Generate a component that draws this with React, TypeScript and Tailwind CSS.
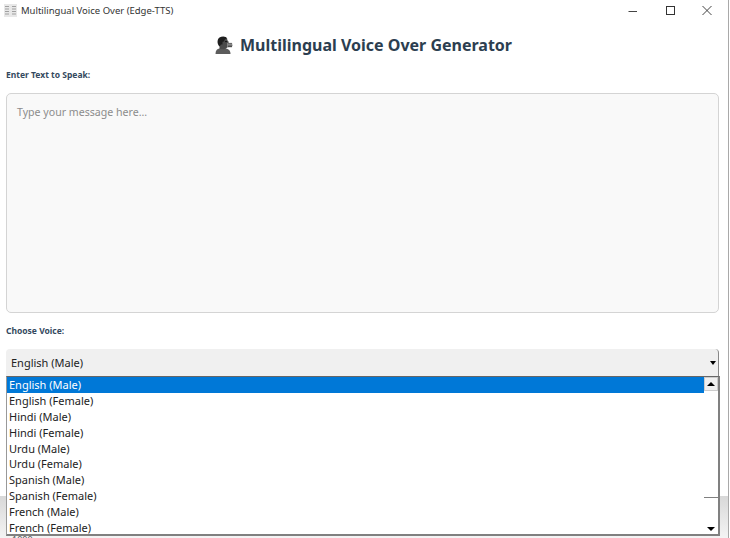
import React from 'react';

const voices = [
  'English (Male)',
  'English (Female)',
  'Hindi (Male)',
  'Hindi (Female)',
  'Urdu (Male)',
  'Urdu (Female)',
  'Spanish (Male)',
  'Spanish (Female)',
  'French (Male)',
  'French (Female)',
];

function SpeakingHead() {
  return (
    <svg width="20" height="20" viewBox="0 0 20 20" className="shrink-0">
      {/* shoulders */}
      <path d="M1.5 19 C1.5 15.5 3 14.2 5.5 13.6 L11.5 13.6 C14.5 14 16.5 15.5 16.5 19 Z" fill="#5c5c5c" />
      {/* neck and face */}
      <path d="M5.5 14 L5.5 10 C4 7 5 3.5 8 2.5 C11 1.6 13.4 3 13.8 6 L15 7 L15 12 L13 12.6 C12.6 13.6 11.5 14.2 10 14.2 Z" fill="#4a4a4a" />
      {/* hair */}
      <path d="M5.6 11.5 C2.8 9 3 4.5 5.5 2.6 C8 0.8 12 1 13.4 3.6 C11.4 3.8 10.4 4.8 10 6.4 L8.6 6.8 L8.4 9.4 L7 9.6 Z" fill="#1e1e1e" />
      {/* eye */}
      <path d="M11 6.6 L13 6.6" stroke="#111111" strokeWidth="1" />
      {/* sound lines at the mouth */}
      <rect x="13.6" y="7.6" width="4.8" height="5" rx="1" fill="#dcdcdc" />
      <path d="M14 8.8 L18 8.8 M14 10.2 L18.4 10.2 M14 11.6 L18 11.6" stroke="#2a2a2a" strokeWidth="0.9" />
    </svg>
  );
}

export default function App() {
  return (
    <div className="relative w-[730px] h-[538px] overflow-hidden bg-white font-['Noto_Sans',sans-serif] text-[#222]">
      <div className="flex flex-col h-full w-[729px] border-r border-[#a9a9a9] bg-white">
        {/* title bar */}
        <div className="flex items-center h-[21px] shrink-0 pl-[4px]">
          <svg width="13" height="13" viewBox="0 0 13 13" className="shrink-0">
            <rect width="13" height="13" fill="#e8e8e8" />
            <path d="M1 2.5h4M8 2.5h4M1 5h4M8 5h4M1 7.5h4M8 7.5h4M1 10h4M8 10h4" stroke="#a0a0a0" strokeWidth="1" />
          </svg>
          <span className="ml-[4px] text-[9.5px] leading-none text-[#333]">Multilingual Voice Over (Edge-TTS)</span>
          <div className="ml-auto flex items-center gap-[25px] pr-[15px]">
            <svg width="12" height="12" viewBox="0 0 12 12"><path d="M1.5 6.5h8.5" stroke="#444" strokeWidth="1" /></svg>
            <svg width="12" height="12" viewBox="0 0 12 12"><rect x="2.5" y="1.5" width="8" height="8" fill="none" stroke="#333" strokeWidth="1" /></svg>
            <svg width="12" height="12" viewBox="0 0 12 12"><path d="M1.5 1L10.5 10M10.5 1L1.5 10" stroke="#444" strokeWidth="1" /></svg>
          </div>
        </div>

        {/* heading */}
        <div className="flex items-center justify-center gap-[6px] mt-[13px] h-[22px] pr-[2px]">
          <SpeakingHead />
          <h1 className="text-[16px] leading-none font-bold text-[#2c3e50]">Multilingual Voice Over Generator</h1>
        </div>

        <div className="flex flex-col px-[6px] pr-[9px] mt-[13px]">
          <label className="text-[8.5px] leading-[12px] font-bold text-[#34495e]">Enter Text to Speak:</label>
          <div className="mt-[12px] h-[220px] rounded-[5px] border border-[#d4d4d4] bg-[#f9f9f9] px-[10px] py-[10px] text-[10.6px] leading-[16px] text-[#8c8c8c]">
            Type your message here...
          </div>
          <label className="mt-[12px] text-[8.5px] leading-[12px] font-bold text-[#34495e]">Choose Voice:</label>
          <div className="relative mt-[12px] h-[27px] flex items-center justify-between bg-[#f0f0f0] pl-[5px] rounded-t-[4px] border-r border-[#888]">
            <span className="text-[11px] leading-none text-[#222]">English (Male)</span>
            <span className="mr-[2px] w-0 h-0 border-x-[3px] border-x-transparent border-t-[4px] border-t-black" />
          </div>
        </div>
      </div>

      {/* bottom strip behind the popup */}
      <div className="absolute left-0 top-[496px] w-[728px] h-[42px] bg-gradient-to-b from-[#d8d8d8] to-[#f4f4f4]" />
      <div className="absolute left-[12px] top-[535px] text-[9px] leading-[10px] text-[#555]">1000</div>

      {/* open dropdown list */}
      <div className="absolute left-[6px] top-[376px] w-[714px] h-[160px] flex bg-white border-r-2 border-b-2 border-[#808080] border-l border-l-[#999] border-t border-t-[#666]">
        <ul className="flex-1 min-w-0 flex flex-col text-[11px] text-[#222]">
          {voices.map((v, i) => (
            <li key={v} className={i === 0 ? 'h-[16px] leading-[16px] pl-[2px] bg-[#0078d7] text-white' : 'h-[15.85px] leading-[16px] pl-[2px]'}>
              {v}
            </li>
          ))}
        </ul>
        <div className="w-[14px] flex flex-col items-center">
          <div className="w-full h-[14px] flex items-center justify-center bg-[#f0f0f0] border border-[#ccc]">
            <span className="w-0 h-0 border-x-[4px] border-x-transparent border-b-[4px] border-b-black" />
          </div>
          <div className="w-full h-[107px] bg-white border-b border-[#808080]" />
          <div className="w-full flex-1 flex items-end justify-center pb-[3px]">
            <span className="w-0 h-0 border-x-[4px] border-x-transparent border-t-[4px] border-t-black" />
          </div>
        </div>
      </div>
    </div>
  );
}
